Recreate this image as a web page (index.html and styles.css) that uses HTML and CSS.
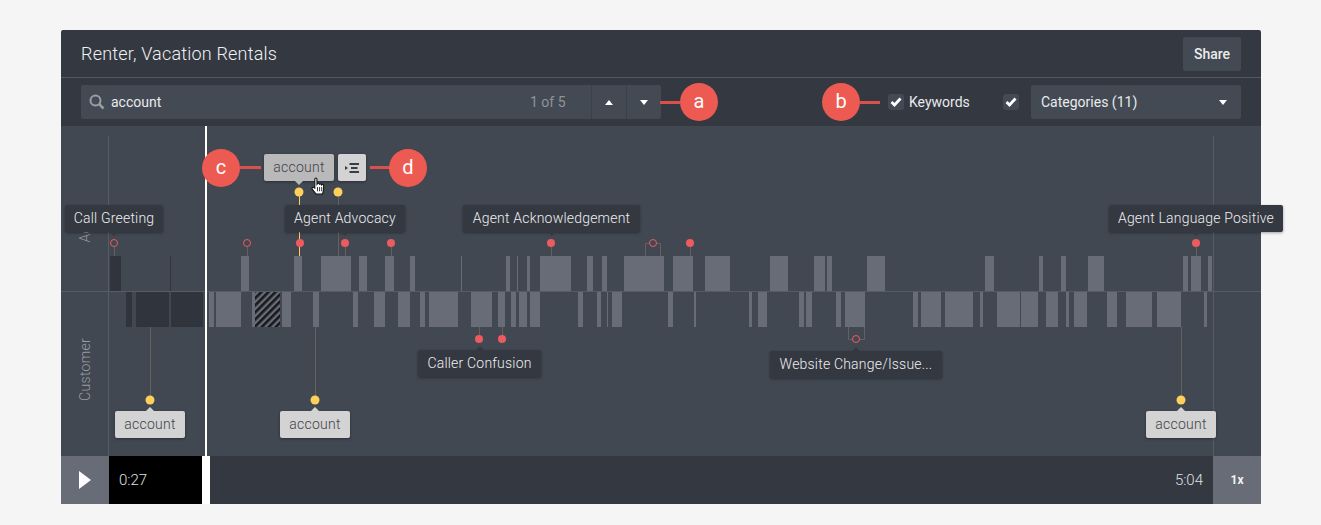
FILE: index.html
```html
<!DOCTYPE html>
<html lang="en">

<head>
    <meta charset="UTF-8">
    <title>Renter, Vacation Rentals</title>
    <link rel="stylesheet" href="styles.css">
</head>

<body>
    <div class="card">
        <div class="header">
            <div class="title">Renter, Vacation Rentals</div>
            <button class="share" type="button">Share</button>
        </div>

        <div class="toolbar">
            <div class="search">
                <svg class="search-icon" width="16" height="16" viewBox="0 0 16 16">
                    <circle cx="6.5" cy="6.5" r="5" fill="none" stroke="#9b9ea4" stroke-width="2" />
                    <path d="M10.2 10.2L14.5 14.5" stroke="#9b9ea4" stroke-width="2.6" />
                </svg>
                <span class="search-text">account</span>
                <span class="search-count">1 of 5</span>
                <span class="step"><i class="caret caret-up"></i></span>
                <span class="step"><i class="caret caret-down"></i></span>
            </div>
            <span class="lead lead-a"></span>
            <span class="badge">a</span>

            <span class="badge badge-b">b</span>
            <span class="lead lead-b"></span>
            <span class="check">
                <svg width="12" height="10" viewBox="0 0 12 10"><path d="M1.5 5l3 3 6-6.5" fill="none" stroke="#fff" stroke-width="2.8" /></svg>
            </span>
            <span class="check-label">Keywords</span>
            <span class="check">
                <svg width="12" height="10" viewBox="0 0 12 10"><path d="M1.5 5l3 3 6-6.5" fill="none" stroke="#fff" stroke-width="2.8" /></svg>
            </span>
            <div class="select">
                <span>Categories (11)</span>
                <i class="caret caret-down"></i>
            </div>
        </div>

        <div class="timeline">
            <!-- page coordinates, so bars can be read straight off the picture -->
            <svg class="chart" width="1200" height="330" viewBox="61 126 1200 330">
                <defs>
                    <pattern id="hatch" width="5" height="5" patternUnits="userSpaceOnUse" patternTransform="rotate(45)">
                        <rect width="5" height="5" fill="#686c76" />
                        <rect width="2.6" height="5" fill="#16181c" />
                    </pattern>
                </defs>

                <g class="grid">
                    <rect x="61" y="291" width="1200" height="1" />
                    <rect x="108" y="136" width="1" height="320" />
                    <rect x="1213" y="136" width="1" height="320" />
                </g>

                <g class="stems">
                    <path d="M114.500 247V256M247.500 247V256M345.500 247V256M338.500 196V256M391.500 247V256M551.500 247V256M690.500 247V256M1196.500 247V256" />
                    <path d="M645.500 256V243.500H649M660.500 256V243.500H657" />
                    <path d="M479.500 327V335M502.500 327V335M848.500 327V339.500H852M864.500 327V339.500H860" />
                    <path d="M150.500 327V396M315.500 327V396M1181.500 327V396" />
                </g>
                <path class="stem-active" d="M299.500 196V256" />

                <g class="bars">
                    <rect x="241" y="256" width="8" height="35" />
                    <rect x="294" y="256" width="8" height="35" />
                    <rect x="321" y="256" width="30" height="35" />
                    <rect x="359" y="256" width="8" height="35" />
                    <rect x="385" y="256" width="9" height="35" />
                    <rect x="410" y="256" width="5" height="35" />
                    <rect x="461" y="256" width="1" height="35" />
                    <rect x="506" y="256" width="4" height="35" />
                    <rect x="517" y="256" width="1" height="35" />
                    <rect x="527" y="256" width="3" height="35" />
                    <rect x="540" y="256" width="31" height="35" />
                    <rect x="587" y="256" width="6" height="35" />
                    <rect x="602" y="256" width="5" height="35" />
                    <rect x="624" y="256" width="40" height="35" />
                    <rect x="673" y="256" width="20" height="35" />
                    <rect x="705" y="256" width="25" height="35" />
                    <rect x="770" y="256" width="18" height="35" />
                    <rect x="814" y="256" width="11" height="35" />
                    <rect x="827" y="256" width="5" height="35" />
                    <rect x="867" y="256" width="18" height="35" />
                    <rect x="985" y="256" width="9" height="35" />
                    <rect x="1039" y="256" width="4" height="35" />
                    <rect x="1061" y="256" width="5" height="35" />
                    <rect x="1088" y="256" width="16" height="35" />
                    <rect x="1183" y="256" width="5" height="35" />
                    <rect x="1191" y="256" width="10" height="35" />
                    <rect x="1208" y="256" width="4" height="35" />

                    <rect x="209" y="292" width="5" height="35" />
                    <rect x="216" y="292" width="25" height="35" />
                    <rect x="252" y="292" width="3" height="35" />
                    <rect x="282" y="292" width="9" height="35" />
                    <rect x="313" y="292" width="6" height="35" />
                    <rect x="353" y="292" width="5" height="35" />
                    <rect x="374" y="292" width="11" height="35" />
                    <rect x="398" y="292" width="12" height="35" />
                    <rect x="420" y="292" width="5" height="35" />
                    <rect x="429" y="292" width="29" height="35" />
                    <rect x="471" y="292" width="21" height="35" />
                    <rect x="498" y="292" width="7" height="35" />
                    <rect x="511" y="292" width="5" height="35" />
                    <rect x="519" y="292" width="8" height="35" />
                    <rect x="530" y="292" width="10" height="35" />
                    <rect x="578" y="292" width="5" height="35" />
                    <rect x="597" y="292" width="4" height="35" />
                    <rect x="607" y="292" width="1" height="35" />
                    <rect x="612" y="292" width="10" height="35" />
                    <rect x="668" y="292" width="5" height="35" />
                    <rect x="694" y="292" width="2" height="35" />
                    <rect x="749" y="292" width="3" height="35" />
                    <rect x="758" y="292" width="9" height="35" />
                    <rect x="799" y="292" width="5" height="35" />
                    <rect x="806" y="292" width="6" height="35" />
                    <rect x="836" y="292" width="5" height="35" />
                    <rect x="845" y="292" width="20" height="35" />
                    <rect x="913" y="292" width="5" height="35" />
                    <rect x="921" y="292" width="20" height="35" />
                    <rect x="945" y="292" width="28" height="35" />
                    <rect x="980" y="292" width="3" height="35" />
                    <rect x="997" y="292" width="23" height="35" />
                    <rect x="1021" y="292" width="17" height="35" />
                    <rect x="1046" y="292" width="12" height="35" />
                    <rect x="1066" y="292" width="3" height="35" />
                    <rect x="1074" y="292" width="13" height="35" />
                    <rect x="1107" y="292" width="10" height="35" />
                    <rect x="1126" y="292" width="26" height="35" />
                    <rect x="1157" y="292" width="24" height="35" />
                    <rect x="1204" y="292" width="3" height="35" />
                </g>
                <rect x="255" y="292" width="25" height="35" fill="url(#hatch)" />

                <g class="bars-dark">
                    <rect x="110" y="256" width="11" height="35" />
                    <rect x="170" y="256" width="1" height="35" />
                    <rect x="126" y="292" width="6" height="35" />
                    <rect x="136" y="292" width="33" height="35" />
                    <rect x="171" y="292" width="32" height="35" />
                </g>

                <g class="dots-red">
                    <circle cx="300" cy="243" r="4" />
                    <circle cx="345" cy="243" r="4" />
                    <circle cx="391" cy="243" r="4" />
                    <circle cx="551" cy="243" r="4" />
                    <circle cx="690" cy="243" r="4" />
                    <circle cx="1196" cy="243" r="4" />
                    <circle cx="479" cy="339" r="4" />
                    <circle cx="502" cy="339" r="4" />
                </g>
                <g class="dots-open">
                    <circle cx="114" cy="243" r="3.500" />
                    <circle cx="247" cy="243" r="3.500" />
                    <circle cx="653" cy="243" r="3.500" />
                    <circle cx="856" cy="339" r="3.500" />
                </g>
                <g class="dots-yellow">
                    <circle cx="299" cy="192" r="4.500" />
                    <circle cx="338" cy="192" r="4.500" />
                    <circle cx="150" cy="400" r="4.500" />
                    <circle cx="315" cy="400" r="4.500" />
                    <circle cx="1181" cy="400" r="4.500" />
                </g>
            </svg>

            <span class="playhead"></span>
            <span class="row-label row-agent">Agent</span>
            <span class="row-label row-customer">Customer</span>

            <span class="tip tip-greeting">Call Greeting</span>
            <span class="tip tip-advocacy">Agent Advocacy</span>
            <span class="tip tip-ack">Agent Acknowledgement</span>
            <span class="tip tip-language">Agent Language Positive</span>
            <span class="tip tip-up tip-confusion">Caller Confusion</span>
            <span class="tip tip-up tip-website">Website Change/Issue...</span>

            <span class="tag tag-1">account</span>
            <span class="tag tag-2">account</span>
            <span class="tag tag-3">account</span>

            <span class="tag-hover">account</span>
            <span class="tag-action">
                <svg width="14" height="10" viewBox="0 0 14 10">
                    <path d="M0 3L3 5L0 7z" fill="#3a3d44" />
                    <path d="M4.500 1h9.500M6 5h6.500M4.500 9h9.500" stroke="#3a3d44" stroke-width="1.800" />
                </svg>
            </span>

            <span class="badge badge-c">c</span>
            <span class="lead lead-c"></span>
            <span class="lead lead-d"></span>
            <span class="badge badge-d">d</span>

            <svg class="hand" width="14" height="18" viewBox="0 0 13 17">
                <path d="M3.500 10.500V2a1 1 0 0 1 2 0v5l.5-.7a1 1 0 0 1 1.800.2l.2.4a1 1 0 0 1 1.700.3l.2.4a1 1 0 0 1 1.900.6v3.800l-1 4H4.500L1 11.500c-.6-1 .6-2.300 1.500-1.500z" fill="#fff" stroke="#111" stroke-width="1" />
                <path d="M6 9.500v4M8 9.500v4M10 9.500v4" stroke="#111" stroke-width=".8" />
            </svg>
        </div>

        <div class="footer">
            <span class="play"><i class="play-icon"></i></span>
            <span class="elapsed">0:27</span>
            <span class="knob"></span>
            <span class="total">5:04</span>
            <span class="speed">1x</span>
        </div>
    </div>
</body>

</html>
```

FILE: styles.css
```css
body {
    margin: 0;
    padding: 30px 60px 21px 61px;
    background: #f5f5f5;
    font-family: Roboto, "Liberation Sans", sans-serif;
}

.card {
    width: 1200px;
    height: 474px;
    border-radius: 2px;
    display: flex;
    flex-direction: column;
    background: #343841;
    color: #e9eaec;
}

.header {
    height: 47px;
    padding: 7px 20px 0;
    box-sizing: border-box;
    display: flex;
    justify-content: space-between;
}

.title {
    font-size: 18px;
    font-weight: 300;
    letter-spacing: 0.2px;
    line-height: 34px;
    color: #f0f1f2;
}

.share {
    width: 58px;
    height: 34px;
    padding: 0;
    border: none;
    border-radius: 2px;
    background: #434a54;
    color: #eceded;
    font-family: inherit;
    font-size: 14px;
    font-weight: 500;
}

.toolbar {
    height: 49px;
    padding: 0 20px;
    box-sizing: border-box;
    border-top: 1px solid #535862;
    display: flex;
    align-items: center;
}

.search {
    width: 580px;
    height: 34px;
    border-radius: 2px;
    background: #434a54;
    display: flex;
    align-items: center;
    font-size: 14px;
}

.search-icon {
    margin-left: 8px;
}

.search-text {
    margin-left: 6px;
    flex: 1;
    color: #e9eaec;
}

.search-count {
    width: 61px;
    color: #8f939a;
}

.step {
    width: 34px;
    height: 34px;
    border-left: 1px solid #3b414a;
    display: flex;
    align-items: center;
    justify-content: center;
}

.caret {
    width: 0;
    height: 0;
    border-left: 4px solid transparent;
    border-right: 4px solid transparent;
}

.caret-up {
    border-bottom: 5px solid #fff;
}

.caret-down {
    border-top: 5px solid #fff;
}

.badge {
    width: 38px;
    height: 38px;
    border-radius: 50%;
    background: #ec5a52;
    color: #fff;
    font-size: 20px;
    line-height: 36px;
    text-align: center;
    flex: none;
}

.lead {
    width: 20px;
    height: 3px;
    background: #d9504d;
    flex: none;
}

.lead-a {
    margin-left: -1px;
}

.badge-b {
    margin-left: auto;
}

.lead-b {
    margin-right: 8px;
}

.check {
    width: 16px;
    height: 16px;
    border-radius: 3px;
    background: #434a54;
    display: flex;
    align-items: center;
    justify-content: center;
}

.check-label {
    width: 94px;
    margin-left: 5px;
    font-size: 14px;
    color: #e9eaec;
}

.select {
    width: 210px;
    height: 34px;
    margin-left: 12px;
    padding: 0 14px 0 10px;
    box-sizing: border-box;
    border-radius: 2px;
    background: #434a54;
    display: flex;
    align-items: center;
    justify-content: space-between;
    font-size: 14px;
}

.timeline {
    position: relative;
    height: 330px;
    background: #414852;
}

.chart {
    position: absolute;
    top: 0;
    left: 0;
}

.grid rect {
    fill: #565c66;
}

.stems path {
    fill: none;
    stroke: #62625f;
    stroke-width: 1;
}

.stem-active {
    fill: none;
    stroke: #fdd05b;
    stroke-width: 1;
}

.bars rect {
    fill: #686c76;
}

.bars-dark rect {
    fill: #30343d;
}

.dots-red circle {
    fill: #ee5a5f;
}

.dots-open circle {
    fill: none;
    stroke: #ee5a5f;
    stroke-width: 1;
}

.dots-yellow circle {
    fill: #fdd05b;
}

.playhead {
    position: absolute;
    top: 0;
    bottom: 0;
    left: 144px;
    width: 2px;
    background: #fff;
}

.row-label {
    position: absolute;
    left: 16px;
    font-size: 14px;
    font-weight: 300;
    letter-spacing: 0.3px;
    line-height: 16px;
    color: #989ca3;
    white-space: nowrap;
    writing-mode: vertical-rl;
    transform: rotate(180deg);
}

.row-agent {
    top: 79px;
}

.row-customer {
    top: 212px;
}

.tip {
    position: absolute;
    height: 27px;
    box-sizing: border-box;
    border-radius: 2px;
    background: #343841;
    box-shadow: 0 1px 3px rgba(0, 0, 0, 0.35);
    color: #eeeff0;
    font-size: 14px;
    font-weight: 300;
    line-height: 26px;
    letter-spacing: 0.2px;
    text-align: center;
    white-space: nowrap;
}

.tip::after {
    content: "";
    position: absolute;
    left: 50%;
    top: 100%;
    margin-left: -4px;
    border-left: 4px solid transparent;
    border-right: 4px solid transparent;
    border-top: 4px solid #343841;
}

.tip-up::after {
    top: auto;
    bottom: 100%;
    border-top: none;
    border-bottom: 4px solid #343841;
}

.tip-greeting {
    left: 4px;
    top: 79px;
    width: 98px;
}

.tip-advocacy {
    left: 224px;
    top: 79px;
    width: 120px;
}

.tip-ack {
    left: 402px;
    top: 79px;
    width: 177px;
}

.tip-language {
    left: 1048px;
    top: 79px;
    width: 174px;
}

.tip-confusion {
    left: 357px;
    top: 224px;
    width: 123px;
}

.tip-website {
    left: 709px;
    top: 225px;
    width: 172px;
}

.tag {
    position: absolute;
    top: 285px;
    width: 70px;
    height: 27px;
    border-radius: 2px;
    background: #d3d3d3;
    box-shadow: 0 1px 3px rgba(0, 0, 0, 0.35);
    color: #404349;
    font-size: 14px;
    font-weight: 300;
    line-height: 27px;
    letter-spacing: 0.25px;
    text-align: center;
}

.tag::before {
    content: "";
    position: absolute;
    left: 50%;
    bottom: 100%;
    margin-left: -4px;
    border-left: 4px solid transparent;
    border-right: 4px solid transparent;
    border-bottom: 4px solid #d3d3d3;
}

.tag-1 {
    left: 54px;
}

.tag-2 {
    left: 219px;
}

.tag-3 {
    left: 1085px;
}

.tag-hover {
    position: absolute;
    left: 203px;
    top: 28px;
    width: 70px;
    height: 27px;
    border-radius: 2px;
    background: #b9b9b9;
    box-shadow: 0 1px 3px rgba(0, 0, 0, 0.35);
    color: #404349;
    font-size: 14px;
    font-weight: 300;
    line-height: 27px;
    letter-spacing: 0.25px;
    text-align: center;
}

.tag-hover::after {
    content: "";
    position: absolute;
    left: 50%;
    top: 100%;
    margin-left: -4px;
    border-left: 4px solid transparent;
    border-right: 4px solid transparent;
    border-top: 4px solid #b9b9b9;
}

.tag-action {
    position: absolute;
    left: 277px;
    top: 28px;
    width: 28px;
    height: 27px;
    border-radius: 2px;
    background: #d3d3d3;
    box-shadow: 0 1px 3px rgba(0, 0, 0, 0.35);
    display: flex;
    align-items: center;
    justify-content: center;
}

.badge-c {
    position: absolute;
    left: 141px;
    top: 23px;
}

.badge-d {
    position: absolute;
    left: 328px;
    top: 23px;
}

.lead-c {
    position: absolute;
    left: 179px;
    top: 40px;
    width: 21px;
}

.lead-d {
    position: absolute;
    left: 309px;
    top: 40px;
}

.hand {
    position: absolute;
    left: 250px;
    top: 51px;
}

.footer {
    height: 48px;
    display: flex;
    align-items: center;
    font-size: 15px;
    font-weight: 300;
    color: #dfe0e2;
}

.play {
    width: 48px;
    height: 48px;
    background: #686c76;
    display: flex;
    align-items: center;
    justify-content: center;
}

.play-icon {
    width: 0;
    height: 0;
    border-top: 9px solid transparent;
    border-bottom: 9px solid transparent;
    border-left: 12px solid #fff;
}

.elapsed {
    width: 93px;
    height: 48px;
    padding-left: 10px;
    box-sizing: border-box;
    background: #000;
    line-height: 48px;
}

.knob {
    width: 8px;
    height: 48px;
    background: #fff;
}

.total {
    flex: 1;
    padding-right: 10px;
    text-align: right;
}

.speed {
    width: 48px;
    height: 48px;
    background: #686c76;
    color: #f2f2f3;
    font-size: 12px;
    font-weight: 700;
    line-height: 48px;
    text-align: center;
}
```
